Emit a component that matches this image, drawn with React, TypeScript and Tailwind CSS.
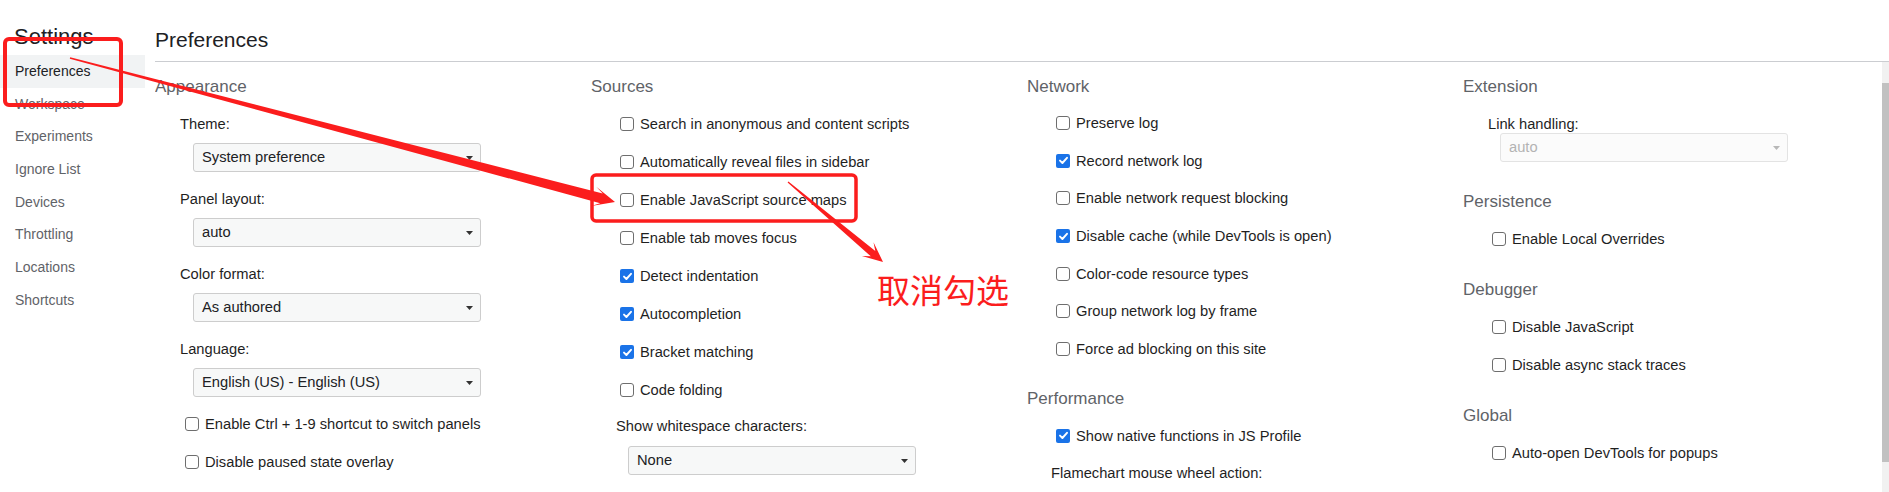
import React from "react";

const Check = ({ checked }: { checked?: boolean }) =>
  checked ? (
    <span className="w-[14px] h-[14px] rounded-[2px] bg-[#1a73e8] flex items-center justify-center shrink-0">
      <svg width="11" height="11" viewBox="0 0 11 11">
        <path d="M2 5.6 L4.4 8 L9 2.8" stroke="white" strokeWidth="1.9" fill="none" strokeLinecap="round" strokeLinejoin="round" />
      </svg>
    </span>
  ) : (
    <span className="w-[14px] h-[14px] rounded-[3px] border border-[#6e6e6e] bg-white shrink-0" />
  );

const Row = ({ label, checked, indent = "pl-[29px]" }: { label: string; checked?: boolean; indent?: string }) => (
  <div className={`h-[38px] flex items-center gap-[6px] ${indent}`}>
    <Check checked={checked} />
    <span className="whitespace-nowrap">{label}</span>
  </div>
);

const Heading = ({ children, extra = "" }: { children: React.ReactNode; extra?: string }) => (
  <div className={`h-[43px] pt-[14px] text-[17px] leading-[22px] text-[#5f6368] ${extra}`}>{children}</div>
);

const Select = ({ value, disabled, extra = "" }: { value: string; disabled?: boolean; extra?: string }) => (
  <div
    className={`w-[288px] h-[29px] rounded-[3px] flex items-center justify-between pl-[8px] pr-[7px] ${
      disabled ? "border border-[#e3e3e3] bg-[#fbfbfb] text-[#b3b3b3]" : "border border-[#cdcdcd] bg-[#f7f8f8] text-[#202124]"
    } ${extra}`}
  >
    <span className="whitespace-nowrap">{value}</span>
    <svg width="7" height="4" viewBox="0 0 7 4">
      <path d="M0 0 H7 L3.5 4 Z" fill={disabled ? "#b8b8b8" : "#333333"} />
    </svg>
  </div>
);

const Label = ({ children, extra = "pl-[25px]" }: { children: React.ReactNode; extra?: string }) => (
  <div className={`h-[38px] flex items-center whitespace-nowrap ${extra}`}>{children}</div>
);

export default function App() {
  const side = ["Preferences", "Workspace", "Experiments", "Ignore List", "Devices", "Throttling", "Locations", "Shortcuts"];
  return (
    <div className="relative w-[1889px] h-[492px] overflow-hidden bg-white flex font-['Liberation_Sans',Arial,sans-serif] text-[14.7px] text-[#1f1f1f]">
      {/* Sidebar */}
      <div className="w-[145px] shrink-0 pt-[26px]">
        <div className="pl-[14px] text-[22px] leading-[22px] text-[#202124]">Settings</div>
        <div className="mt-[7px] flex flex-col text-[14px]">
          {side.map((s, i) => (
            <div
              key={s}
              className={`h-[32.7px] flex items-center pl-[15px] ${i === 0 ? "bg-[#f1f3f4] text-[#202124]" : "text-[#5f6368]"}`}
            >
              {s}
            </div>
          ))}
        </div>
      </div>

      {/* Main */}
      <div className="flex-1 flex flex-col min-w-0">
        <div className="ml-[10px] pt-[28px] pb-[9px] border-b border-[#cbcdd1] text-[21px] leading-[24px] text-[#202124]">
          Preferences
        </div>
        <div className="flex-1 flex min-h-0">
          <div className="flex-1 flex ml-[10px] overflow-hidden">
            {/* Appearance */}
            <div className="w-[436px] shrink-0 flex flex-col">
              <Heading>Appearance</Heading>
              <Label>Theme:</Label>
              <Select value="System preference" extra="ml-[38px] mb-[8px]" />
              <Label>Panel layout:</Label>
              <Select value="auto" extra="ml-[38px] mb-[8px]" />
              <Label>Color format:</Label>
              <Select value="As authored" extra="ml-[38px] mb-[8px]" />
              <Label>Language:</Label>
              <Select value="English (US) - English (US)" extra="ml-[38px] mb-[8px]" />
              <Row label="Enable Ctrl + 1-9 shortcut to switch panels" indent="pl-[30px]" />
              <Row label="Disable paused state overlay" indent="pl-[30px]" />
            </div>

            {/* Sources */}
            <div className="w-[436px] shrink-0 flex flex-col">
              <Heading>Sources</Heading>
              <Row label="Search in anonymous and content scripts" />
              <Row label="Automatically reveal files in sidebar" />
              <Row label="Enable JavaScript source maps" />
              <Row label="Enable tab moves focus" />
              <Row label="Detect indentation" checked />
              <Row label="Autocompletion" checked />
              <Row label="Bracket matching" checked />
              <Row label="Code folding" />
              <div className="h-[34px] flex items-center pl-[25px] whitespace-nowrap">Show whitespace characters:</div>
              <Select value="None" extra="ml-[37px] mt-[3px]" />
            </div>

            {/* Network */}
            <div className="w-[436px] shrink-0 flex flex-col">
              <Heading>Network</Heading>
              <Row label="Preserve log" />
              <Row label="Record network log" checked />
              <Row label="Enable network request blocking" />
              <Row label="Disable cache (while DevTools is open)" checked />
              <Row label="Color-code resource types" />
              <Row label="Group network log by frame" />
              <Row label="Force ad blocking on this site" />
              <Heading extra="mt-[7px]">Performance</Heading>
              <Row label="Show native functions in JS Profile" checked />
              <Label extra="pl-[24px]">Flamechart mouse wheel action:</Label>
            </div>

            {/* Extension */}
            <div className="flex-1 min-w-[330px] flex flex-col">
              <Heading>Extension</Heading>
              <div className="h-[28px] pt-[10px] leading-[18px] pl-[25px] whitespace-nowrap">Link handling:</div>
              <Select value="auto" disabled extra="ml-[37px]" />
              <Heading extra="mt-[15px]">Persistence</Heading>
              <Row label="Enable Local Overrides" />
              <Heading extra="mt-[7px]">Debugger</Heading>
              <Row label="Disable JavaScript" />
              <Row label="Disable async stack traces" />
              <Heading extra="mt-[7px]">Global</Heading>
              <Row label="Auto-open DevTools for popups" />
            </div>
          </div>
          {/* Scrollbar */}
          <div className="w-[7px] shrink-0 bg-[#f1f1f1] flex flex-col">
            <div className="h-[21px]" />
            <div className="h-[379px] bg-[#c1c1c1]" />
          </div>
        </div>
      </div>

      {/* Annotation overlay */}
      <svg className="absolute inset-0 pointer-events-none" width="1889" height="492" viewBox="0 0 1889 492">
        <rect x="5" y="39" width="116" height="66" rx="4" fill="none" stroke="#fb1d1d" strokeWidth="4" />
        <rect x="592" y="175" width="264" height="46" rx="4" fill="none" stroke="#fb1d1d" strokeWidth="3.5" />
        <polygon
          fill="#fb1d1d"
          points="70.18,57.32 602.74,193.59 596.28,186.71 615,202 591.18,206.05 600.18,203.25 69.82,58.68"
        />
        <polygon
          fill="#fb1d1d"
          points="788.4,181.5 875.3,250.95 873.5,242.2 883,262 861.9,256.0 870.8,256.31 787.6,182.5"
        />
      </svg>
      <div className="absolute left-[877px] top-[273px] text-[33px] leading-[33px] text-[#fb1d1d] font-['Noto_Sans_CJK_SC',sans-serif] whitespace-nowrap">
        取消勾选
      </div>
    </div>
  );
}
